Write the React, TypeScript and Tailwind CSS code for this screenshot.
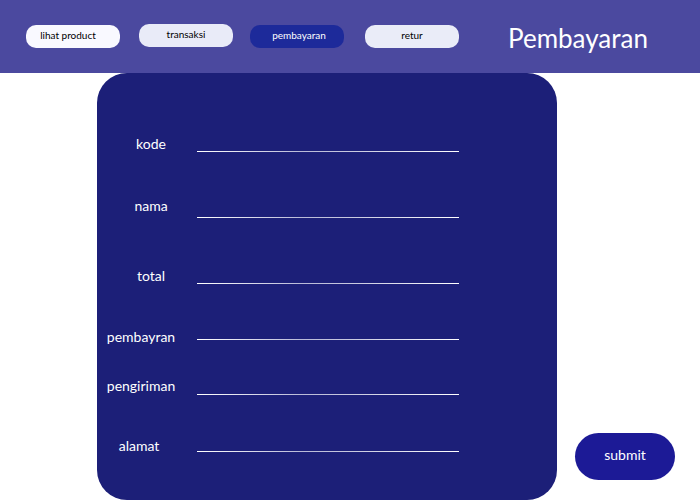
import React from "react";

const navItems = [
  { label: "lihat product", tone: "bg-[#f9f9ff] text-black", shift: "mt-[1px] pr-[10px]" },
  { label: "transaksi", tone: "bg-[#e9ebf8] text-black ml-[19px]", shift: "" },
  { label: "pembayaran", tone: "bg-[#1d2a9a] text-white ml-[17px]", shift: "mt-[1px] pl-[4px]" },
  { label: "retur", tone: "bg-[#eaecf8] text-black ml-[21px]", shift: "mt-[1px]" },
];

const fields = [
  { label: "kode", height: "h-[62px]", pad: "pl-2", lineTop: "mt-[17px]" },
  { label: "nama", height: "h-[70px]", pad: "pl-2", lineTop: "mt-[21px]" },
  { label: "total", height: "h-[61px]", pad: "pl-2", lineTop: "mt-[17px]" },
  { label: "pembayran", height: "h-[49px]", pad: "pr-3", lineTop: "mt-[12px]" },
  { label: "pengiriman", height: "h-[60px]", pad: "pr-3", lineTop: "mt-[18px]" },
  { label: "alamat", height: "h-[24px]", pad: "pr-4", lineTop: "mt-[15px]" },
];

export default function App() {
  return (
    <div className="h-[500px] w-[700px] overflow-hidden bg-white font-['Lato','Noto_Sans',sans-serif]">
      <header className="flex h-[73px] items-start bg-[#4b499f] pl-[26px] pt-[24px]">
        <nav className="flex">
          {navItems.map((n) => (
            <div
              key={n.label}
              className={`flex h-[23px] w-[94px] items-center justify-center rounded-[10px] pb-[3px] text-[10px] ${n.tone} ${n.shift}`}
            >
              {n.label}
            </div>
          ))}
        </nav>
        <h1 className="ml-[49px] mt-[-2px] text-[26px] leading-[32px] text-white">Pembayaran</h1>
      </header>

      <div className="flex items-end">
        <section className="ml-[97px] h-[427px] w-[460px] rounded-[30px] bg-[#1c1f78] pt-[61px]">
          {fields.map((f) => (
            <div key={f.label} className={`flex items-start ${f.height}`}>
              <label className={`w-[100px] text-center text-[14px] leading-5 text-white ${f.pad}`}>
                {f.label}
              </label>
              <div
                className={`h-px w-[262px] bg-[linear-gradient(90deg,#ffffff_0%,#b9bad8_40%,#c9cae0_60%,#ffffff_100%)] ${f.lineTop}`}
              />
            </div>
          ))}
        </section>
        <button className="mb-5 ml-[18px] h-[47px] w-[100px] rounded-[24px] bg-[#1c1a96] pb-[4px] text-[14px] text-white">
          submit
        </button>
      </div>
    </div>
  );
}
